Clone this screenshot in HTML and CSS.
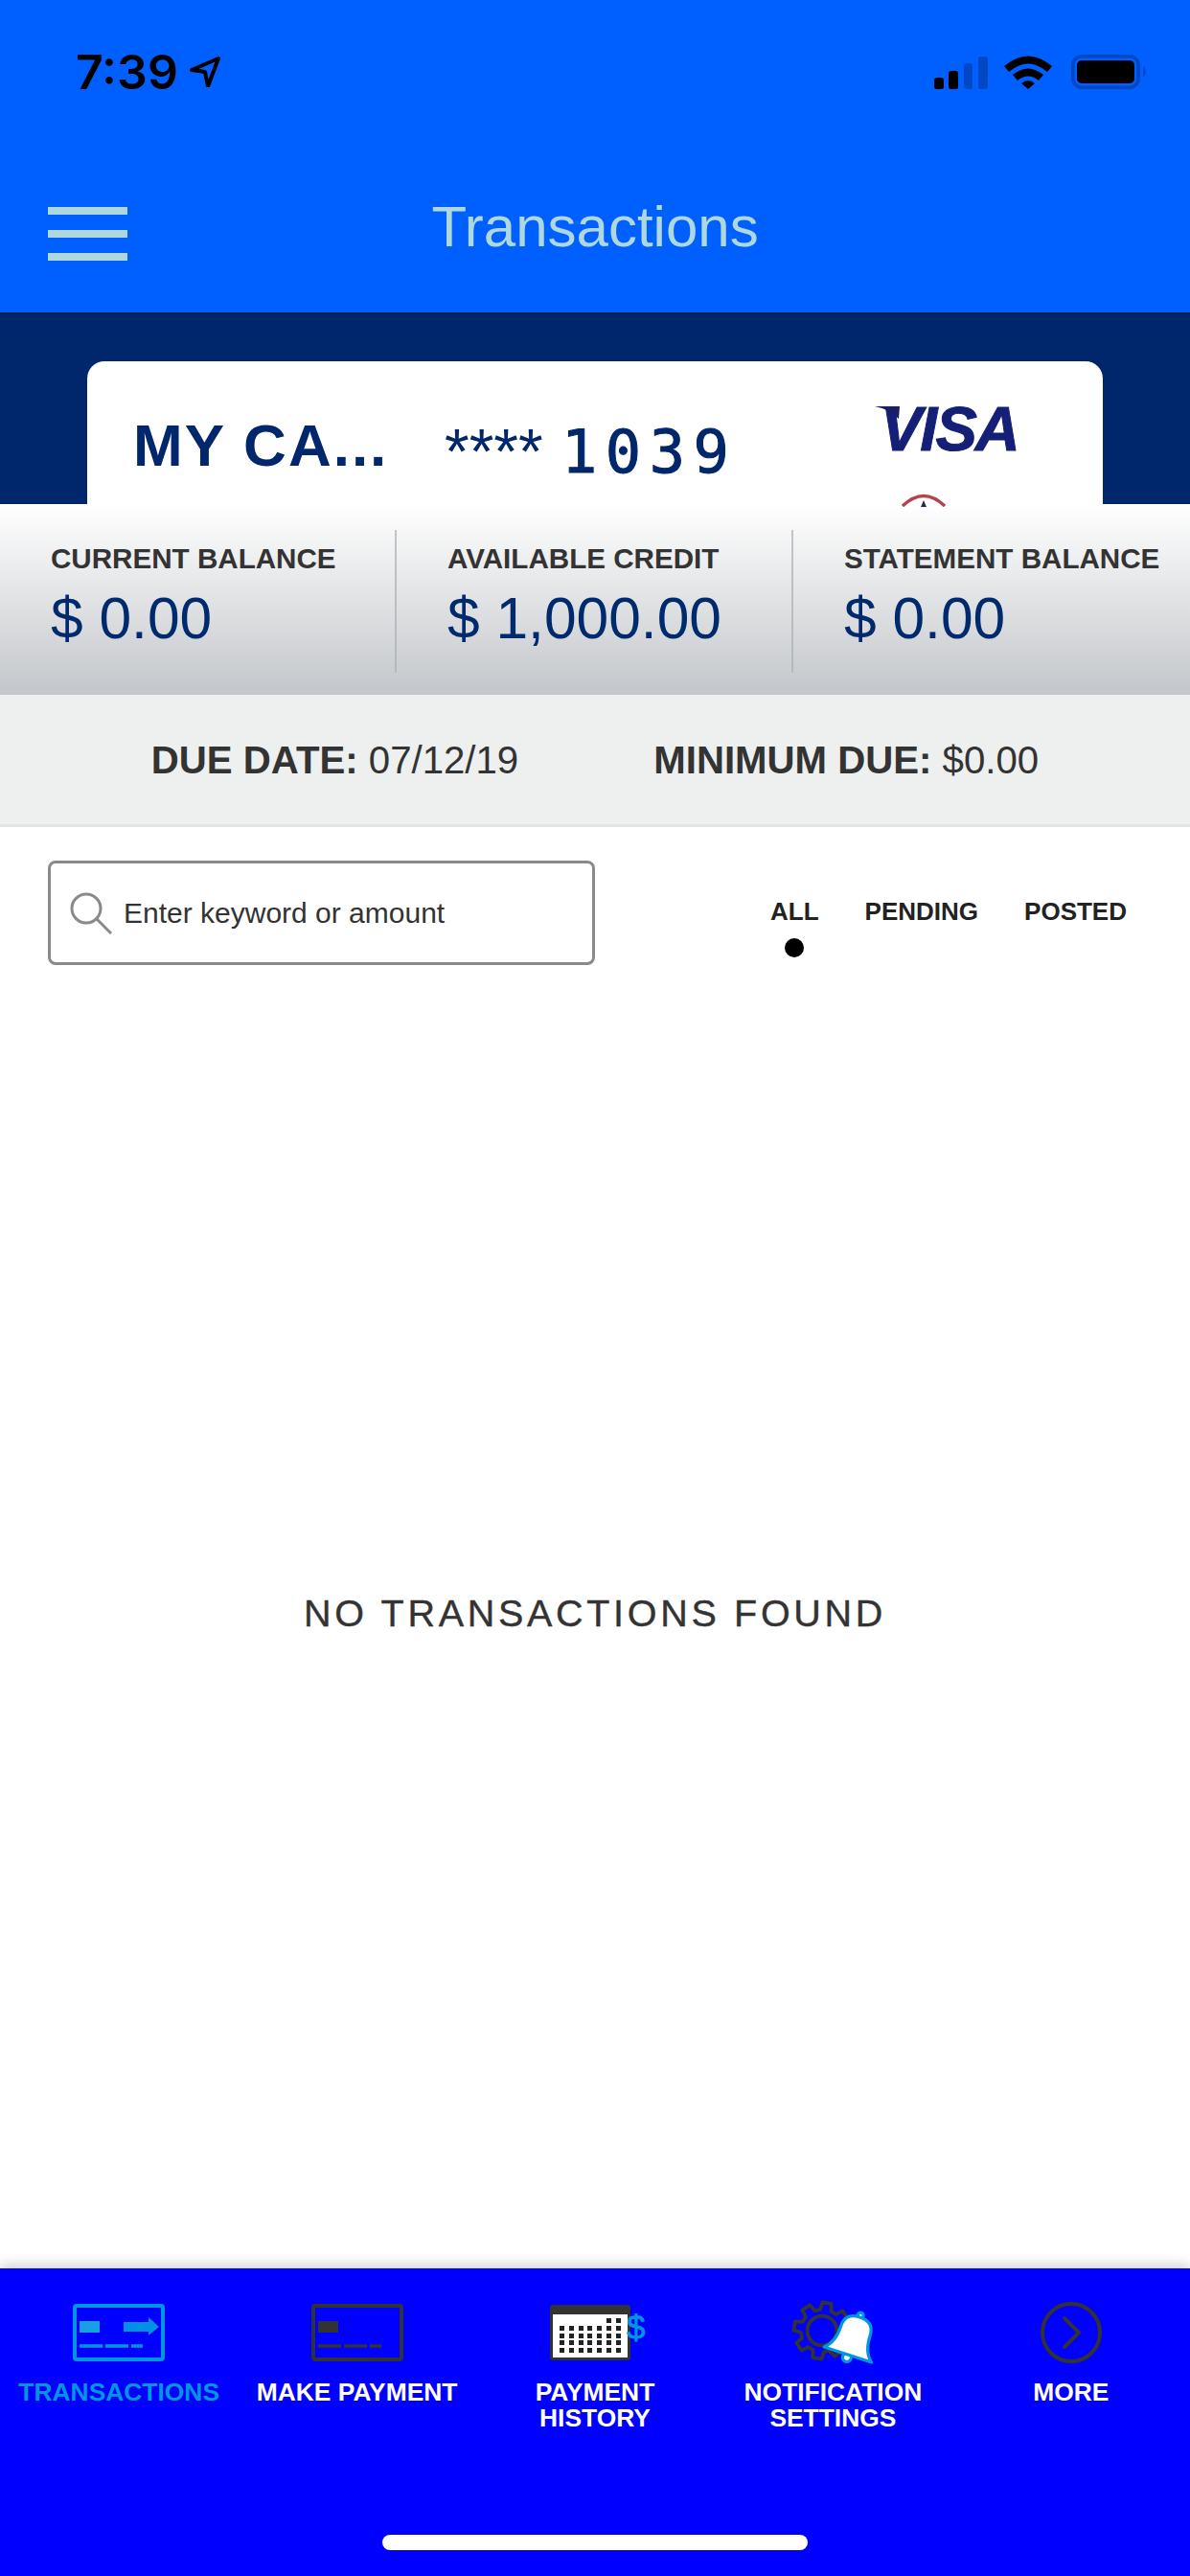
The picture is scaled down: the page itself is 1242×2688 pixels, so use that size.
FILE: index.html
```html
<!DOCTYPE html>
<html lang="en">
<head>
<meta charset="utf-8">
<title>Transactions</title>
<link rel="stylesheet" href="styles.css">
</head>
<body>
<div class="app">
  <header class="topbar">
    <div class="status">
      <div class="status-left">
        <span class="clock">7:39</span>
        <svg class="loc" viewBox="0 0 32 32"><path d="M2 14 L30 2 L19 31 L16 16 Z" fill="none" stroke="#000" stroke-width="4" stroke-linejoin="round"/></svg>
      </div>
      <div class="status-right">
        <svg class="signal" viewBox="0 0 56 34"><rect x="0" y="22" width="10" height="12" rx="2.5" fill="#000"/><rect x="15" y="15" width="10" height="19" rx="2.5" fill="#000"/><rect x="31" y="7" width="9" height="27" rx="2.5" fill="#0047c4"/><rect x="46" y="0" width="10" height="34" rx="2.5" fill="#0047c4"/></svg>
        <svg class="wifi" viewBox="0 0 50 36"><path d="M0 12 Q25 -9 50 12 L45 18 Q25 1 5 18 Z M9 21 Q25 8 41 21 L36 27 Q25 18 14 27 Z M18 30 Q25 24 32 30 L25 36 Z" fill="#000"/></svg>
        <svg class="battery" viewBox="0 0 81 36"><rect x="1.8" y="1.8" width="68.4" height="32.4" rx="9" fill="none" stroke="#0047c4" stroke-width="3.6"/><rect x="6" y="6" width="60" height="24" rx="5" fill="#000"/><path d="M75 12 Q81 18 75 24 Z" fill="#0047c4"/></svg>
      </div>
    </div>
    <div class="titlebar">
      <div class="burger"><span></span><span></span><span></span></div>
      <h1 class="title">Transactions</h1>
      <div></div>
    </div>
  </header>

  <section class="hero">
    <div class="card">
      <div class="card-name">MY CA...</div>
      <div class="card-number"><span class="stars">****</span><span class="digits">1039</span></div>
      <div class="card-brand">
        <div class="visa"><svg class="visa-tail" viewBox="0 0 30 14"><path d="M0 0 H26 L25 13 Q16 3 0 0 Z" fill="#1a1f63"/></svg><span class="visa-word">VISA</span></div>
        <svg class="emblem" viewBox="0 0 48 16"><path d="M2 15 Q24 -6 46 15" fill="none" stroke="#b5434e" stroke-width="3.5"/><path d="M24 9 L27 16 H21 Z" fill="#1f2a55"/></svg>
      </div>
    </div>
  </section>

  <section class="stats">
    <div class="stat"><div class="stat-label">CURRENT BALANCE</div><div class="stat-value">$ 0.00</div></div>
    <div class="stat"><div class="stat-label">AVAILABLE CREDIT</div><div class="stat-value">$ 1,000.00</div></div>
    <div class="stat"><div class="stat-label">STATEMENT BALANCE</div><div class="stat-value">$ 0.00</div></div>
  </section>

  <section class="due">
    <div><strong>DUE DATE:</strong> 07/12/19</div>
    <div><strong>MINIMUM DUE:</strong> $0.00</div>
  </section>

  <section class="filters">
    <div class="search">
      <svg class="search-icon" viewBox="0 0 44 44"><circle cx="17" cy="17" r="15" fill="none" stroke="#8a8a8a" stroke-width="3"/><path d="M28 28 L43 43" stroke="#8a8a8a" stroke-width="3"/></svg>
      <span class="placeholder">Enter keyword or amount</span>
    </div>
    <div class="tabs">
      <div class="tab">ALL<span class="dot"></span></div>
      <div class="tab">PENDING</div>
      <div class="tab">POSTED</div>
    </div>
  </section>

  <main class="empty">NO TRANSACTIONS FOUND</main>

  <nav class="nav">
    <div class="nav-items">
      <div class="nav-item active">
        <div class="nav-icon">
          <svg class="ico-card" viewBox="0 0 96 60"><rect x="2" y="2" width="92" height="56" rx="2" fill="none" stroke="#0096e0" stroke-width="4"/><rect x="7" y="18" width="21" height="12" fill="#18a0e6"/><path d="M53 19 H79 V14 L90 24 L79 33 V29 H53 Z" fill="#0090e6"/><path d="M7 44 H31 M34 44 H58 M61 44 H73" stroke="#0096e0" stroke-width="3.4"/></svg>
        </div>
        <div class="nav-label">TRANSACTIONS</div>
      </div>
      <div class="nav-item">
        <div class="nav-icon">
          <svg class="ico-card" viewBox="0 0 96 60"><rect x="2" y="2" width="92" height="56" rx="2" fill="none" stroke="#333" stroke-width="4"/><rect x="7" y="18" width="21" height="12" fill="#333"/><path d="M7 44 H31 M34 44 H58 M61 44 H73" stroke="#333" stroke-width="3.4"/></svg>
        </div>
        <div class="nav-label">MAKE PAYMENT</div>
      </div>
      <div class="nav-item">
        <div class="nav-icon">
          <div class="calendar">
            <div class="cal-sheet">
              <div class="cal-row"><i class="off"></i><i class="off"></i><i class="off"></i><i class="off"></i><i class="off"></i><i></i><i></i></div>
              <div class="cal-row"><i></i><i></i><i></i><i></i><i></i><i></i><i></i></div>
              <div class="cal-row"><i></i><i></i><i></i><i></i><i></i><i></i><i></i></div>
              <div class="cal-row"><i></i><i></i><i></i><i></i><i></i><i></i><i></i></div>
              <div class="cal-row"><i></i><i></i><i></i><i></i><i></i><i></i><i></i></div>
            </div>
            <span class="cal-dollar">$</span>
          </div>
        </div>
        <div class="nav-label">PAYMENT<br>HISTORY</div>
      </div>
      <div class="nav-item">
        <div class="nav-icon">
          <svg class="ico-notify" viewBox="0 0 90 68">
            <g transform="translate(34 32) rotate(10) scale(1.06)" fill="none" stroke="#333" stroke-width="3.6" stroke-linejoin="round">
              <path d="M-5.44 -20.29 L-4.38 -27.66 L4.38 -27.66 L5.44 -20.29 L10.5 -18.19 L16.46 -22.66 L22.66 -16.46 L18.19 -10.5 L20.29 -5.44 L27.66 -4.38 L27.66 4.38 L20.29 5.44 L18.19 10.5 L22.66 16.46 L16.46 22.66 L10.5 18.19 L5.44 20.29 L4.38 27.66 L-4.38 27.66 L-5.44 20.29 L-10.5 18.19 L-16.46 22.66 L-22.66 16.46 L-18.19 10.5 L-20.29 5.44 L-27.66 4.38 L-27.66 -4.38 L-20.29 -5.44 L-18.19 -10.5 L-22.66 -16.46 L-16.46 -22.66 L-10.5 -18.19 Z"/>
              <circle r="14.5"/>
            </g>
            <g transform="translate(67 38) rotate(18)" fill="#fff" stroke="#0096e0" stroke-width="3.2" stroke-linejoin="round">
              <circle cx="0" cy="23" r="4.5"/>
              <circle cx="0" cy="-23" r="3"/>
              <path d="M-26 20 Q-16 12 -16 -6 Q-16 -21 0 -21 Q16 -21 16 -6 Q16 12 26 20 Z"/>
            </g>
          </svg>
        </div>
        <div class="nav-label">NOTIFICATION<br>SETTINGS</div>
      </div>
      <div class="nav-item">
        <div class="nav-icon">
          <svg class="ico-more" viewBox="0 0 64 64"><circle cx="32" cy="32" r="30" fill="none" stroke="#333" stroke-width="4"/><path d="M25 17 L40 32 L25 47" fill="none" stroke="#333" stroke-width="4" stroke-linecap="round" stroke-linejoin="round"/></svg>
        </div>
        <div class="nav-label">MORE</div>
      </div>
    </div>
    <div class="home"></div>
  </nav>
</div>
</body>
</html>
```

FILE: styles.css
```css
* { box-sizing: border-box; }
html, body { margin: 0; padding: 0; }
body { font-family: "Liberation Sans", Arial, sans-serif; background: #fff; color: #333; }
.app { width: 1242px; height: 2688px; display: flex; flex-direction: column; overflow: hidden; position: relative; }

/* header */
.topbar { height: 328px; background: #0060ff; padding-top: 56px; border-bottom: 2px solid #00205c; }
.status { display: flex; justify-content: space-between; align-items: center; height: 38px; padding: 0 43px 0 79px; }
.status-left { display: flex; align-items: center; gap: 12px; }
.clock { font-family: Inter, "Liberation Sans", sans-serif; font-weight: 600; font-size: 50px; line-height: 38px; color: #000; }
.loc { width: 32px; height: 32px; display: block; }
.status-right { display: flex; align-items: center; gap: 17px; }
.signal { width: 56px; height: 34px; display: block; margin-top: 2px; }
.wifi { width: 50px; height: 36px; display: block; margin-right: 3px; }
.battery { width: 81px; height: 36px; display: block; }

.titlebar { display: grid; grid-template-columns: 1fr auto 1fr; align-items: center; margin-top: 108px; height: 68px; }
.burger { display: flex; flex-direction: column; gap: 16px; padding: 14px 0 0 50px; }
.burger span { display: block; width: 83px; height: 8px; background: #aed8de; }
.title { margin: 0; font-size: 60px; font-weight: 400; line-height: 68px; color: #aed8de; }

/* card */
.hero { height: 198px; background: #00266b; padding: 49px 91px 0; overflow: hidden; }
.card { height: 300px; background: #fff; border-radius: 18px 18px 0 0; display: flex; align-items: flex-start; padding: 58px 0 0 48px; }
.card-name { width: 325px; font-size: 62px; line-height: 60px; font-weight: 700; letter-spacing: 2px; color: #00266b; white-space: nowrap; }
.card-number { display: flex; align-items: flex-start; color: #00266b; white-space: nowrap; }
.stars { font-size: 66px; line-height: 60px; width: 122px; margin-top: 6px; }
.digits { font-family: "DejaVu Sans Mono", monospace; font-size: 62px; line-height: 64px; letter-spacing: 8.5px; margin-top: 5px; -webkit-text-stroke: 1px #00266b; }
.card-brand { position: absolute; left: 913px; top: 424px; width: 170px; }
.visa { position: relative; height: 47px; }
.visa-word { display: block; font-size: 65px; line-height: 47px; font-weight: 700; font-style: italic; letter-spacing: -2px; padding-left: 6px; color: #141f75; -webkit-text-stroke: 1px #141f75; }
.visa-tail { position: absolute; left: 0; top: 0; width: 30px; height: 14px; }
.emblem { display: block; width: 48px; height: 16px; margin: 42px 0 0 27px; }

/* stats */
.stats { height: 199px; padding: 27px 0 23px; display: grid; grid-template-columns: 414px 414px 414px; background: linear-gradient(180deg, #ffffff 0%, #c3c6ca 100%); }
.stat { padding: 13px 0 0 53px; border-right: 2px solid rgba(170,175,178,.7); }
.stat:last-child { border-right: 0; }
.stat-label { font-size: 29.6px; line-height: 34px; font-weight: 700; color: #333; white-space: nowrap; }
.stat-value { font-size: 60.5px; line-height: 70px; margin-top: 10px; color: #002a6e; white-space: nowrap; }

/* due */
.due { height: 138px; background: #eef0f0; border-bottom: 3px solid #e2e4e4; display: flex; justify-content: center; align-items: center; gap: 141px; padding-top: 3px; font-size: 40.2px; color: #333; white-space: nowrap; }
.due strong { font-weight: 700; }

/* filters */
.filters { display: flex; justify-content: space-between; align-items: flex-start; padding: 35px 66px 0 50px; }
.search { width: 571px; height: 109px; border: 3px solid #8a8a8a; border-radius: 8px; display: flex; align-items: center; padding-left: 20px; gap: 12px; background: #fff; }
.search-icon { width: 44px; height: 44px; display: block; }
.placeholder { font-size: 30px; color: #333; white-space: nowrap; }
.tabs { display: flex; gap: 48px; padding-top: 38px; }
.tab { display: flex; flex-direction: column; align-items: center; font-size: 26px; line-height: 30px; font-weight: 700; color: #222; }
.dot { display: block; width: 20px; height: 20px; border-radius: 50%; background: #000; margin-top: 13px; }

/* empty */
.empty { flex: 1; display: flex; align-items: center; justify-content: center; font-size: 39.5px; letter-spacing: 3.7px; color: #333; padding-bottom: 8px; -webkit-text-stroke: .4px #333; }

/* nav */
.nav { height: 321px; background: #0000ff; box-shadow: 0 -4px 12px rgba(0,0,0,.18); padding-top: 33px; display: flex; flex-direction: column; align-items: center; }
.nav-items { display: grid; grid-template-columns: repeat(5, 1fr); width: 100%; }
.nav-item { display: flex; flex-direction: column; align-items: center; color: #fff; }
.nav-item.active { color: #0096e0; }
.nav-icon { height: 68px; display: flex; align-items: center; justify-content: center; }
.ico-card { width: 96px; height: 60px; display: block; }
.ico-more { width: 64px; height: 64px; display: block; }
.ico-notify { width: 90px; height: 68px; display: block; overflow: visible; }
.calendar { position: relative; width: 84px; height: 58px; background: #333; border-radius: 3px; padding: 10px 3px 3px; transform: translateX(-5px); }
.cal-sheet { height: 100%; background: #fff; display: flex; flex-direction: column; justify-content: space-between; padding: 4px 5px 5px; }
.cal-row { display: grid; grid-template-columns: repeat(7, 1fr); justify-items: center; }
.cal-row i { display: block; width: 5px; height: 5px; background: #222; }
.cal-row i.off { background: transparent; }
.cal-dollar { position: absolute; left: 80px; top: 2px; font-size: 35px; line-height: 44px; font-weight: 400; -webkit-text-stroke: .8px #0096e0; color: #0096e0; }
.nav-label { margin-top: 15px; font-size: 26.4px; line-height: 26.5px; font-weight: 700; text-align: center; white-space: nowrap; }
.home { width: 444px; height: 16px; background: #fff; border-radius: 8px; margin-top: auto; margin-bottom: 27px; }
```
